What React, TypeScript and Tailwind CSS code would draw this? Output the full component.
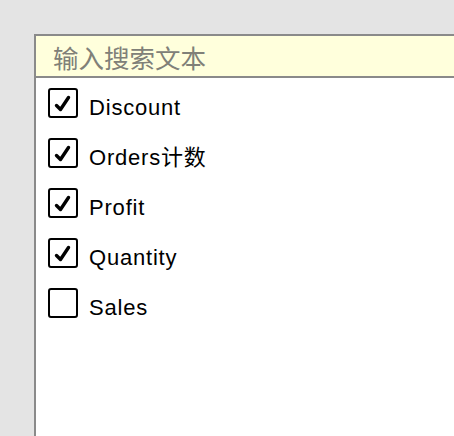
import { useState } from "react";

const fields = [
  { name: "Discount", checked: true },
  { name: "Orders计数", checked: true },
  { name: "Profit", checked: true },
  { name: "Quantity", checked: true },
  { name: "Sales", checked: false },
];

function CheckBox({ checked }: { checked: boolean }) {
  return (
    <span className="flex size-[30px] shrink-0 items-center justify-center rounded-[3px] border-2 border-black bg-white">
      {checked && (
        <svg viewBox="0 0 26 26" className="size-[26px]">
          <path
            d="M6.5 15.5 L10.5 19.5 L18.5 7.5"
            fill="none"
            stroke="black"
            strokeWidth="3.4"
            strokeLinecap="round"
            strokeLinejoin="round"
          />
        </svg>
      )}
    </span>
  );
}

export default function App() {
  const [items, setItems] = useState(fields);

  function toggle(name: string) {
    setItems((prev) =>
      prev.map((f) => (f.name === name ? { ...f, checked: !f.checked } : f))
    );
  }

  return (
    <div className="h-[436px] w-[454px] overflow-hidden bg-[#e4e4e4] pl-[34px] pt-[34px]">
      <div className="h-[460px] w-[480px] border-l-2 border-t-2 border-[#8a8a8a] bg-white font-['Liberation_Sans','Noto_Sans_CJK_SC',sans-serif]">
        <input
          placeholder="输入搜索文本"
          className="block h-[42px] w-full border-b-2 border-[#8a8a8a] bg-[#ffffdc] pl-[17px] text-[25.5px] text-black outline-none placeholder:text-[#808078] font-['Noto_Sans_CJK_SC',sans-serif]"
        />
        <ul className="pl-3">
          {items.map((f) => (
            <li
              key={f.name}
              onClick={() => toggle(f.name)}
              className="flex h-[50px] cursor-pointer items-center gap-[11px]"
            >
              <CheckBox checked={f.checked} />
              <span className="pt-[9px] text-[22px] tracking-[0.8px] text-black">
                {f.name}
              </span>
            </li>
          ))}
        </ul>
      </div>
    </div>
  );
}
